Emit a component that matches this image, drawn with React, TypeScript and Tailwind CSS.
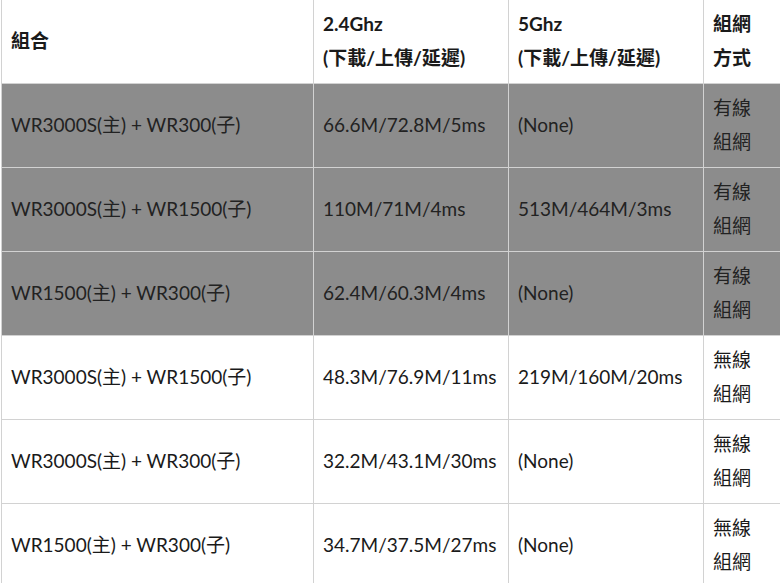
import React from "react";

interface Row {
  combo: string;
  g24: string;
  g5: string;
  mode: [string, string];
  wired: boolean;
}

const rows: Row[] = [
  { combo: "WR3000S(主) + WR300(子)", g24: "66.6M/72.8M/5ms", g5: "(None)", mode: ["有線", "組網"], wired: true },
  { combo: "WR3000S(主) + WR1500(子)", g24: "110M/71M/4ms", g5: "513M/464M/3ms", mode: ["有線", "組網"], wired: true },
  { combo: "WR1500(主) + WR300(子)", g24: "62.4M/60.3M/4ms", g5: "(None)", mode: ["有線", "組網"], wired: true },
  { combo: "WR3000S(主) + WR1500(子)", g24: "48.3M/76.9M/11ms", g5: "219M/160M/20ms", mode: ["無線", "組網"], wired: false },
  { combo: "WR3000S(主) + WR300(子)", g24: "32.2M/43.1M/30ms", g5: "(None)", mode: ["無線", "組網"], wired: false },
  { combo: "WR1500(主) + WR300(子)", g24: "34.7M/37.5M/27ms", g5: "(None)", mode: ["無線", "組網"], wired: false },
];

const cell = "border border-[#d2d2d2] px-[9px] align-middle";

export default function App() {
  return (
    <div
      className="w-[780px] h-[583px] overflow-hidden bg-white pl-[1px] text-[19px] leading-[34px] text-[#1a1a1a]"
      style={{ fontFamily: 'Lato, "Noto Sans CJK TC", sans-serif' }}
    >
      <table className="border-collapse table-fixed w-[800px]">
        <colgroup>
          <col className="w-[312px]" />
          <col className="w-[195px]" />
          <col className="w-[195px]" />
          <col className="w-[98px]" />
        </colgroup>
        <thead>
          <tr className="h-[83px]">
            <th className={`${cell} border-t-0 text-left font-bold`}>組合</th>
            <th className={`${cell} border-t-0 text-left font-bold`}>
              <div>2.4Ghz</div>
              <div>(下載/上傳/延遲)</div>
            </th>
            <th className={`${cell} border-t-0 text-left font-bold`}>
              <div>5Ghz</div>
              <div>(下載/上傳/延遲)</div>
            </th>
            <th className={`${cell} border-t-0 text-left font-bold`}>
              <div>組網</div>
              <div>方式</div>
            </th>
          </tr>
        </thead>
        <tbody>
          {rows.map((r, i) => (
            <tr
              key={i}
              className={r.wired ? "h-[84px] bg-[#8c8c8c] text-[#222]" : "h-[84px] bg-white"}
            >
              <td className={cell}>{r.combo}</td>
              <td className={cell}>{r.g24}</td>
              <td className={cell}>{r.g5}</td>
              <td className={cell}>
                <div>{r.mode[0]}</div>
                <div>{r.mode[1]}</div>
              </td>
            </tr>
          ))}
        </tbody>
      </table>
    </div>
  );
}
